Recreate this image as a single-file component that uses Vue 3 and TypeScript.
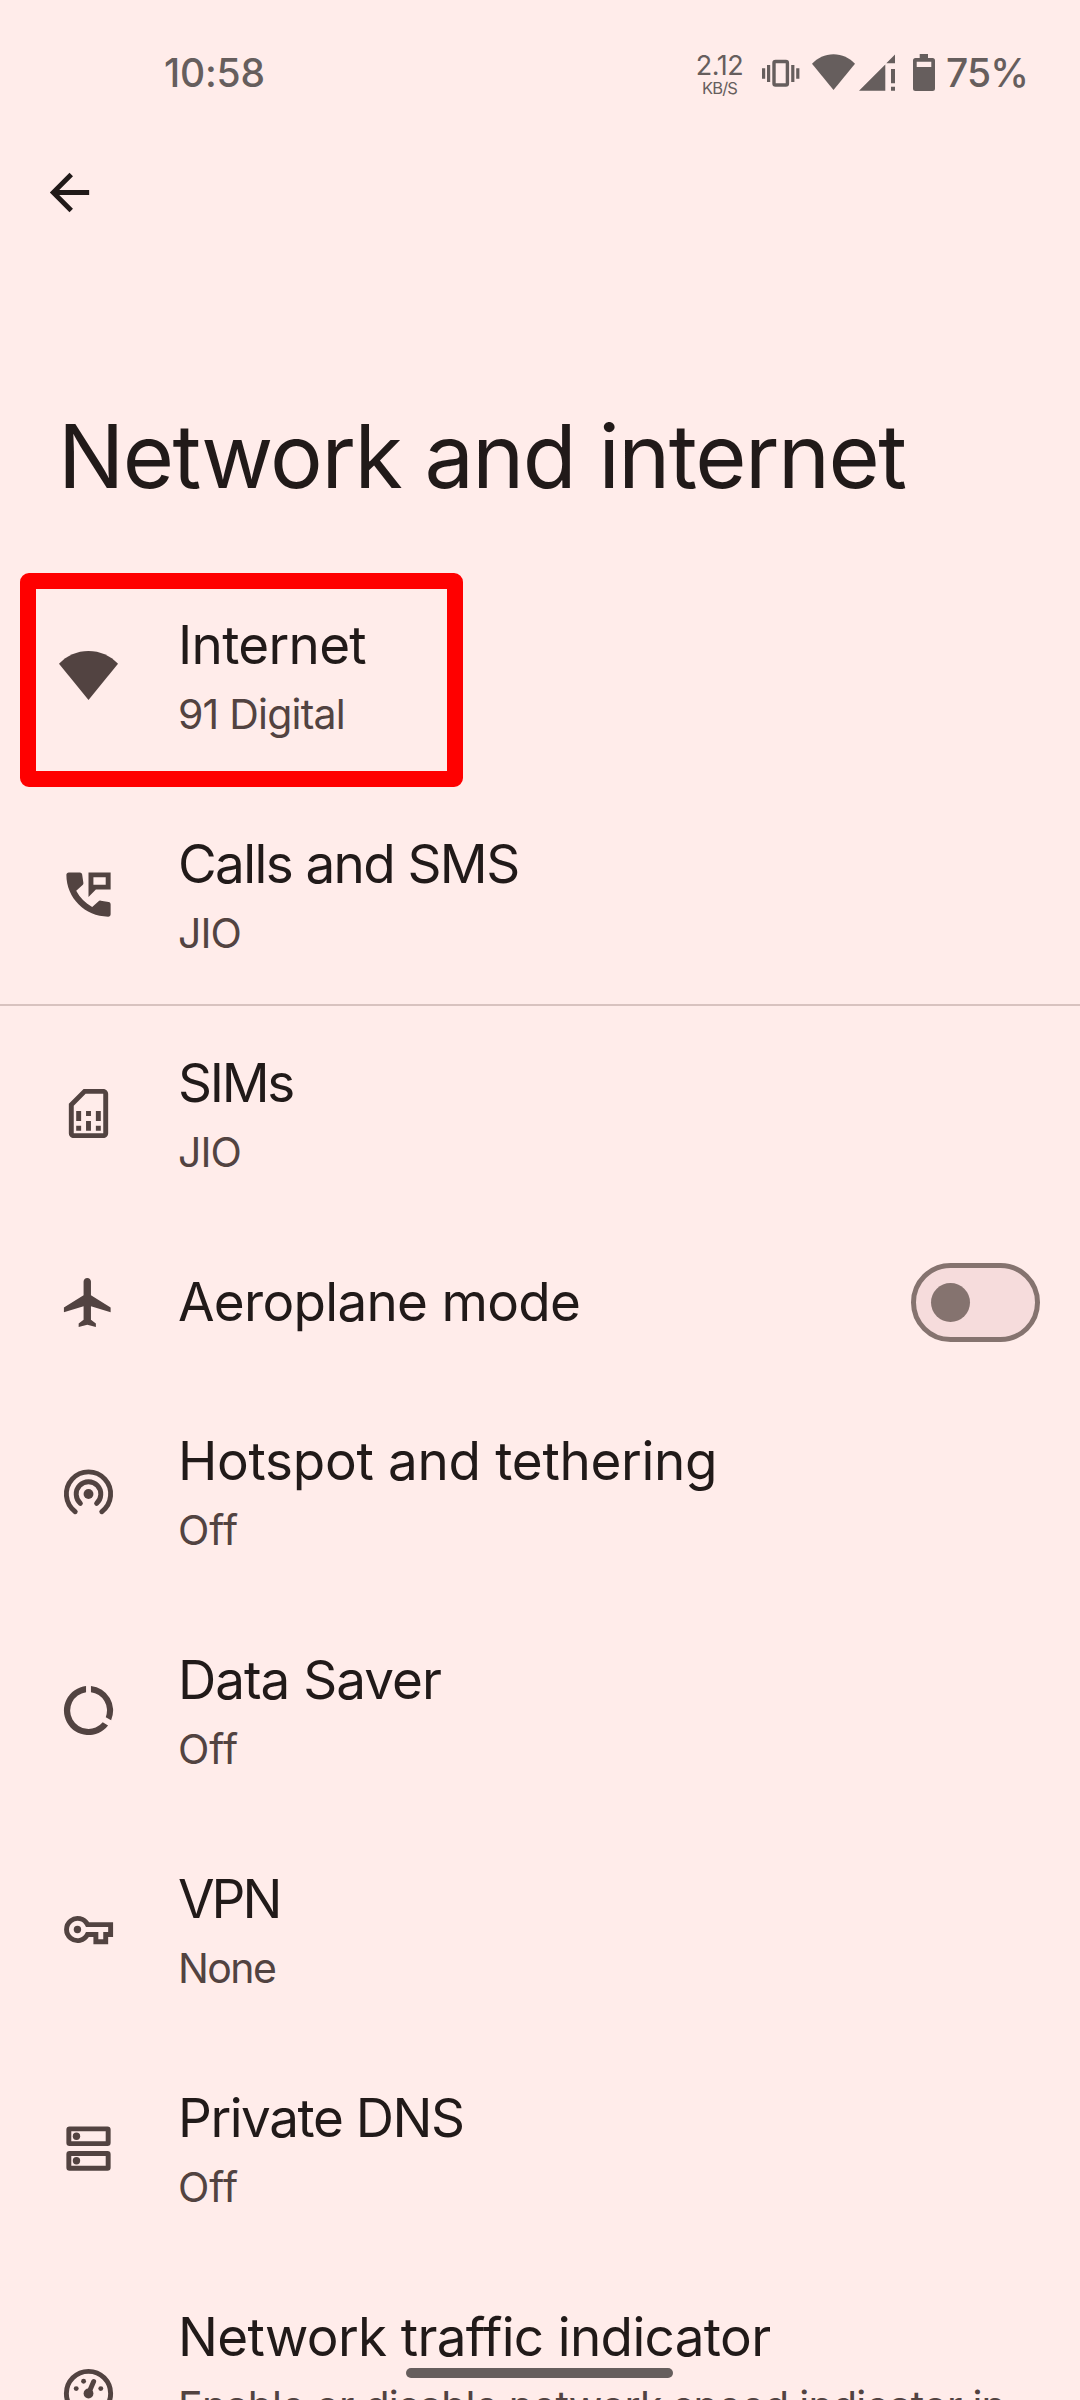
<script setup lang="ts">
interface Item {
  id: string
  title: string
  summary?: string
  titleSpacing: number
  summarySpacing?: number
  toggle?: boolean
  divider?: boolean
  tall?: boolean
}

const items: Item[] = [
  { id: 'wifi', title: 'Internet', summary: '91 Digital', titleSpacing: -0.7, summarySpacing: -0.8 },
  { id: 'calls', title: 'Calls and SMS', summary: 'JIO', titleSpacing: -1.6, summarySpacing: -1 },
  { id: 'sim', title: 'SIMs', summary: 'JIO', titleSpacing: -2.3, summarySpacing: -1, divider: true },
  { id: 'plane', title: 'Aeroplane mode', titleSpacing: -0.7, toggle: true },
  { id: 'hotspot', title: 'Hotspot and tethering', summary: 'Off', titleSpacing: -0.3, summarySpacing: 0 },
  { id: 'data', title: 'Data Saver', summary: 'Off', titleSpacing: -1, summarySpacing: 0 },
  { id: 'vpn', title: 'VPN', summary: 'None', titleSpacing: -3, summarySpacing: -1.6 },
  { id: 'dns', title: 'Private DNS', summary: 'Off', titleSpacing: -1.45, summarySpacing: 0 },
  {
    id: 'traffic',
    title: 'Network traffic indicator',
    summary: 'Enable or disable network speed indicator in',
    titleSpacing: -0.65,
    summarySpacing: -0.74,
    tall: true,
  },
]
</script>

<template>
  <div class="screen">
    <header class="status">
      <span class="clock">10:58</span>
      <div class="speed">
        <span class="rate">2.12</span>
        <span class="unit">KB/S</span>
      </div>
      <svg class="tray" width="176" height="40" viewBox="0 0 176 40" fill="currentColor">
        <rect x="12" y="11.500" width="13.400" height="23.500" rx="1.500" fill="none" stroke="currentColor" stroke-width="3.400" />
        <path d="M5 15h3.200v17H5zM0 18.300h3.200v10.400H0zM29.200 15h3.200v17h-3.200zM34.200 18.300h3.200v10.400h-3.200z" />
        <path d="M71.500 4.300C63 4.300 55.500 8 50 13.800L71.500 40 93 13.800C87.500 8 80 4.300 71.500 4.300z" />
        <path d="M97 40.700L123.300 14.500V40.700zM124.300 13.300L133 4.500V13.300zM129 19h4v14.300h-4zM129 36.700h4v4h-4z" />
        <path fill-rule="evenodd" d="M157.700 4h8.300v4h4.500q2.500 0 2.500 2.500v28q0 2.500-2.500 2.500h-17q-2.500 0-2.500-2.500v-28q0-2.500 2.500-2.500h4.200zM154.700 11.700v5.300h14.600v-5.300z" />
      </svg>
      <span class="percent">75%</span>
    </header>

    <nav class="toolbar">
      <svg class="icon" viewBox="0 0 24 24" fill="currentColor">
        <path d="M20 11H7.830l5.590-5.590L12 4l-8 8 8 8 1.410-1.410L7.830 13H20v-2z" />
      </svg>
    </nav>

    <h1 class="heading">Network and internet</h1>

    <main class="list">
      <section
        v-for="item in items"
        :key="item.id"
        class="row"
        :class="{ divider: item.divider, single: !item.summary, tall: item.tall }"
      >
        <svg class="icon" viewBox="0 0 24 24" fill="currentColor">
          <path v-if="item.id === 'wifi'" d="M12 2C7.300 2 3.100 3.900 0 7.200L12 22 24 7.200C20.900 3.900 16.700 2 12 2z" />
          <template v-else-if="item.id === 'calls'">
            <path d="M8.500 3H4c-.6 0-1 .4-1 1 0 9.400 7.600 17 17 17 .6 0 1-.4 1-1v-3.900c0-.5-.3-.9-.8-1l-3.200-.6c-.4-.1-.7 0-1 .3L13.500 17.100C10.700 15.500 8.500 13.300 7 10.500L9.600 8.100c.3-.3.4-.6.300-1L9.400 3.800C9.300 3.300 9 3 8.500 3z" />
            <path d="M12 3v10l3-3h6V3zM19 8h-5V5h5z" fill-rule="evenodd" />
          </template>
          <path
            v-else-if="item.id === 'sim'"
            d="M18 2h-8L4 8v12c0 1.100.9 2 2 2h12c1.100 0 2-.9 2-2V4c0-1.100-.9-2-2-2zm0 18H6V8.830L10.830 4H18v16zM7 17h2v2H7zM15 17h2v2h-2zM7 11h2v4H7zM11 15h2v4h-2zM11 11h2v2h-2zM15 11h2v4h-2z"
          />
          <path
            v-else-if="item.id === 'plane'"
            d="M21 16v-2l-8-5V3.500c0-.83-.67-1.500-1.500-1.500S10 2.670 10 3.500V9l-8 5v2l8-2.500V19l-2 1.500V22l3.500-1 3.500 1v-1.500L13 19v-5.500l8 2.500z"
          />
          <template v-else-if="item.id === 'hotspot'">
            <g fill="none" stroke="currentColor" stroke-width="2" stroke-linecap="round">
              <path d="M6.600 20.200A9 9 0 1 1 17.400 20.200" />
              <path d="M8.700 16.800A5 5 0 1 1 15.300 16.800" />
            </g>
            <circle cx="12" cy="13" r="2" />
          </template>
          <path
            v-else-if="item.id === 'data'"
            d="M13 2.050v2.520A7.500 7.500 0 0 1 19.020 14.700L21.200 15.960A10 10 0 0 0 13 2.050zM11 2.050A10 10 0 1 0 19.950 18.070L17.800 16.800A7.500 7.500 0 1 1 11 4.570z"
          />
          <template v-else-if="item.id === 'vpn'">
            <path
              fill="none"
              stroke="currentColor"
              stroke-width="2"
              d="M11.600 10A4.500 4.500 0 1 0 11.600 14H15v3h4v-3h2v-4z"
            />
            <circle cx="7.500" cy="12" r="1.500" />
          </template>
          <template v-else-if="item.id === 'dns'">
            <rect x="4" y="4" width="16" height="6" rx=".3" fill="none" stroke="currentColor" stroke-width="2" stroke-linejoin="round" />
            <rect x="4" y="14" width="16" height="6" rx=".3" fill="none" stroke="currentColor" stroke-width="2" stroke-linejoin="round" />
            <circle cx="7.100" cy="7" r="1.500" />
            <circle cx="7.100" cy="17" r="1.500" />
          </template>
          <template v-else>
            <circle cx="12" cy="12" r="9" fill="none" stroke="currentColor" stroke-width="2" />
            <circle cx="12" cy="12" r="2" />
            <path d="M12 12L14.100 7.100" stroke="currentColor" stroke-width="2" stroke-linecap="round" />
            <circle cx="7" cy="10" r="1" />
            <circle cx="10" cy="7" r="1" />
            <circle cx="17" cy="10" r="1" />
          </template>
        </svg>
        <div class="text">
          <span class="title" :style="{ letterSpacing: item.titleSpacing + 'px' }">{{ item.title }}</span>
          <span v-if="item.summary" class="summary" :style="{ letterSpacing: item.summarySpacing + 'px' }">{{ item.summary }}</span>
        </div>
        <span v-if="item.toggle" class="switch"><span class="knob"></span></span>
        <span v-if="item.id === 'wifi'" class="marker"></span>
      </section>
    </main>

    <div class="home"></div>
  </div>
</template>

<style>
body {
  background: #ffecea;
}
</style>

<style scoped>
.screen {
  position: relative;
  box-sizing: border-box;
  width: 1080px;
  height: 2400px;
  overflow: hidden;
  background: #ffecea;
  color: #211a19;
  font-family: Inter, Roboto, sans-serif;
}
.status {
  display: flex;
  align-items: flex-start;
  box-sizing: border-box;
  height: 144px;
  padding: 50px 0 0 164px;
  color: #665e5d;
}
.status > * {
  flex: none;
}
.clock,
.percent {
  font-size: 39px;
  line-height: 46px;
  font-weight: 500;
  white-space: nowrap;
}
.clock {
  width: 532px;
  letter-spacing: -0.2px;
}
.percent {
  letter-spacing: -0.9px;
}
.speed {
  display: flex;
  flex-direction: column;
  align-items: center;
  width: 47px;
  margin-right: 19px;
}
.rate {
  margin-top: 1px;
  font-size: 27px;
  line-height: 30px;
  letter-spacing: -0.4px;
}
.unit {
  font-size: 16.5px;
  line-height: 15px;
  letter-spacing: -0.8px;
}
.tray {
  overflow: visible;
  margin-right: 8px;
}
.toolbar {
  box-sizing: border-box;
  height: 97px;
  padding: 19px 0 0 40px;
}
.icon {
  display: block;
  flex: none;
  width: 59px;
  height: 59px;
}
.heading {
  margin: 0;
  height: 325px;
  box-sizing: border-box;
  padding: 161px 0 0 58px;
  font-size: 88px;
  line-height: 108px;
  font-weight: 400;
  letter-spacing: -1.5px;
  white-space: nowrap;
}
.row {
  position: relative;
  display: flex;
  align-items: center;
  box-sizing: border-box;
  height: 219px;
  padding: 0 40px 0 59px;
}
.row > .icon {
  color: #524341;
}
.divider::before {
  content: '';
  position: absolute;
  top: 0;
  left: 0;
  right: 0;
  height: 2px;
  background: #d8c2bf;
}
.single {
  height: 159px;
}
.tall {
  height: 271px;
}
.text {
  display: flex;
  flex: 1;
  flex-direction: column;
  align-self: flex-start;
  padding: 47px 0 0 60px;
  white-space: nowrap;
}
.title {
  font-size: 53px;
  line-height: 64px;
}
.summary {
  margin-top: 12px;
  font-size: 41px;
  line-height: 50px;
  color: #524341;
}
.switch {
  display: flex;
  align-items: center;
  box-sizing: border-box;
  width: 129px;
  height: 79px;
  padding-left: 15px;
  border: 5px solid #85736f;
  border-radius: 40px;
  background: #f6dcdc;
}
.knob {
  width: 39px;
  height: 39px;
  border-radius: 50%;
  background: #85736f;
}
.marker {
  position: absolute;
  left: 19.5px;
  top: 7.300px;
  box-sizing: border-box;
  width: 443px;
  height: 213.500px;
  border: 16px solid #ff0000;
  border-radius: 9px;
}
.home {
  position: absolute;
  left: 406px;
  top: 2368px;
  width: 267px;
  height: 10px;
  border-radius: 5px;
  background: #665e5d;
}
</style>
